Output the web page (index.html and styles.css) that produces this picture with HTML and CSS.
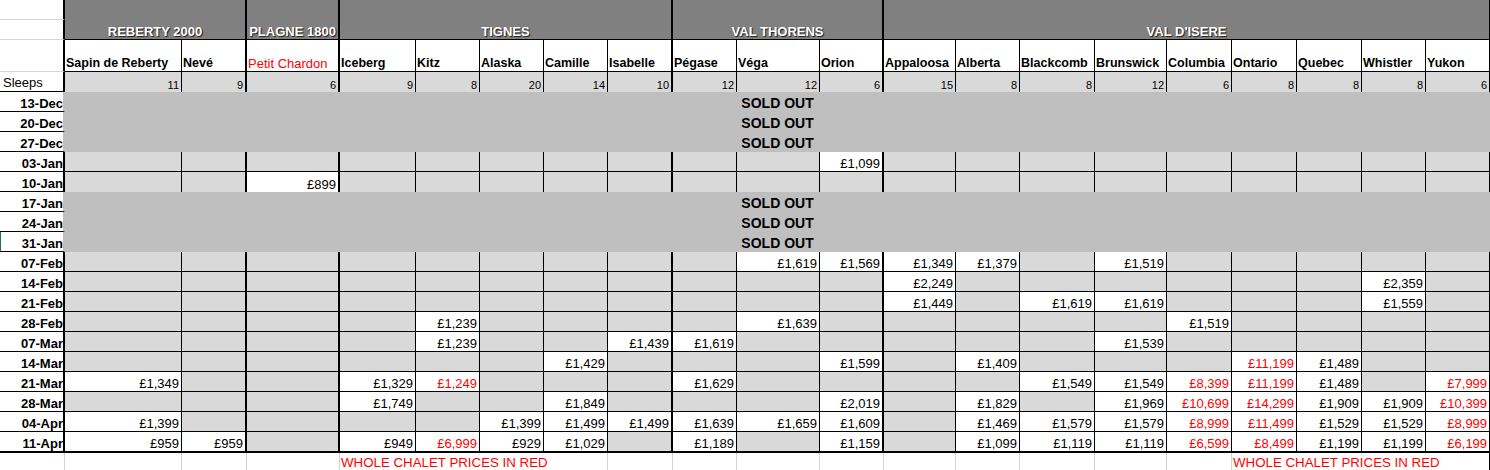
FILE: index.html
```html
<!DOCTYPE html>
<html lang="en">
<head>
<meta charset="utf-8">
<title>Chalet availability</title>
<link rel="stylesheet" href="styles.css">
</head>
<body>
<table class="sheet">
<colgroup>
<col class="c-lbl"><col class="c-sapin"><col class="c-neve"><col class="c-petit"><col class="c-iceberg"><col class="c-kitz"><col class="c-alaska"><col class="c-camille"><col class="c-isabelle"><col class="c-pegase"><col class="c-vega"><col class="c-orion"><col class="c-appaloosa"><col class="c-alberta"><col class="c-blackcomb"><col class="c-brunswick"><col class="c-columbia"><col class="c-ontario"><col class="c-quebec"><col class="c-whistler"><col class="c-yukon">
</colgroup>
<tbody>
<tr class="top">
<td class="lbl"></td>
<td class="region" colspan="2" rowspan="2">REBERTY 2000</td>
<td class="region" rowspan="2">PLAGNE 1800</td>
<td class="region" colspan="5" rowspan="2">TIGNES</td>
<td class="region" colspan="3" rowspan="2">VAL THORENS</td>
<td class="region end" colspan="9" rowspan="2">VAL D'ISERE</td>
</tr>
<tr class="top"><td class="lbl"></td></tr>
<tr class="names grid">
<td class="lbl"></td>
<td>Sapin de Reberty</td><td>Nevé</td><td class="red">Petit Chardon</td><td>Iceberg</td><td>Kitz</td><td>Alaska</td><td>Camille</td><td>Isabelle</td><td>Pégase</td><td>Véga</td><td>Orion</td><td>Appaloosa</td><td>Alberta</td><td>Blackcomb</td><td>Brunswick</td><td>Columbia</td><td>Ontario</td><td>Quebec</td><td>Whistler</td><td>Yukon</td>
</tr>
<tr class="sleeps grid">
<td class="lbl">Sleeps</td>
<td>11</td><td>9</td><td>6</td><td>9</td><td>8</td><td>20</td><td>14</td><td>10</td><td>12</td><td>12</td><td>6</td><td>15</td><td>8</td><td>8</td><td>12</td><td>6</td><td>8</td><td>8</td><td>8</td><td>6</td>
</tr>
<tr class="sold"><td class="lbl">13-Dec</td><td class="so" colspan="20">SOLD OUT</td></tr>
<tr class="sold"><td class="lbl">20-Dec</td><td class="so" colspan="20">SOLD OUT</td></tr>
<tr class="sold"><td class="lbl">27-Dec</td><td class="so" colspan="20">SOLD OUT</td></tr>
<tr class="day grid">
<td class="lbl">03-Jan</td>
<td></td><td></td><td></td><td></td><td></td><td></td><td></td><td></td><td></td><td></td><td class="p">£1,099</td><td></td><td></td><td></td><td></td><td></td><td></td><td></td><td></td><td></td>
</tr>
<tr class="day grid pre">
<td class="lbl">10-Jan</td>
<td></td><td></td><td class="p">£899</td><td></td><td></td><td></td><td></td><td></td><td></td><td></td><td></td><td></td><td></td><td></td><td></td><td></td><td></td><td></td><td></td><td></td>
</tr>
<tr class="sold"><td class="lbl">17-Jan</td><td class="so" colspan="20">SOLD OUT</td></tr>
<tr class="sold"><td class="lbl">24-Jan</td><td class="so" colspan="20">SOLD OUT</td></tr>
<tr class="sold"><td class="lbl sel">31-Jan</td><td class="so" colspan="20">SOLD OUT</td></tr>
<tr class="day grid">
<td class="lbl">07-Feb</td>
<td></td><td></td><td></td><td></td><td></td><td></td><td></td><td></td><td></td><td class="p">£1,619</td><td class="p">£1,569</td><td class="p">£1,349</td><td class="p">£1,379</td><td></td><td class="p">£1,519</td><td></td><td></td><td></td><td></td><td></td>
</tr>
<tr class="day grid">
<td class="lbl">14-Feb</td>
<td></td><td></td><td></td><td></td><td></td><td></td><td></td><td></td><td></td><td></td><td></td><td class="p">£2,249</td><td></td><td></td><td></td><td></td><td></td><td></td><td class="p">£2,359</td><td></td>
</tr>
<tr class="day grid">
<td class="lbl">21-Feb</td>
<td></td><td></td><td></td><td></td><td></td><td></td><td></td><td></td><td></td><td></td><td></td><td class="p">£1,449</td><td></td><td class="p">£1,619</td><td class="p">£1,619</td><td></td><td></td><td></td><td class="p">£1,559</td><td></td>
</tr>
<tr class="day grid">
<td class="lbl">28-Feb</td>
<td></td><td></td><td></td><td></td><td class="p">£1,239</td><td></td><td></td><td></td><td></td><td class="p">£1,639</td><td></td><td></td><td></td><td></td><td></td><td class="p">£1,519</td><td></td><td></td><td></td><td></td>
</tr>
<tr class="day grid">
<td class="lbl">07-Mar</td>
<td></td><td></td><td></td><td></td><td class="p">£1,239</td><td></td><td></td><td class="p">£1,439</td><td class="p">£1,619</td><td></td><td></td><td></td><td></td><td></td><td class="p">£1,539</td><td></td><td></td><td></td><td></td><td></td>
</tr>
<tr class="day grid">
<td class="lbl">14-Mar</td>
<td></td><td></td><td></td><td></td><td></td><td></td><td class="p">£1,429</td><td></td><td></td><td></td><td class="p">£1,599</td><td></td><td class="p">£1,409</td><td></td><td></td><td></td><td class="p w">£11,199</td><td class="p">£1,489</td><td></td><td></td>
</tr>
<tr class="day grid">
<td class="lbl">21-Mar</td>
<td class="p">£1,349</td><td></td><td></td><td class="p">£1,329</td><td class="p w">£1,249</td><td></td><td></td><td></td><td class="p">£1,629</td><td></td><td></td><td></td><td></td><td class="p">£1,549</td><td class="p">£1,549</td><td class="p w">£8,399</td><td class="p w">£11,199</td><td class="p">£1,489</td><td></td><td class="p w">£7,999</td>
</tr>
<tr class="day grid">
<td class="lbl">28-Mar</td>
<td></td><td></td><td></td><td class="p">£1,749</td><td></td><td></td><td class="p">£1,849</td><td></td><td></td><td></td><td class="p">£2,019</td><td></td><td class="p">£1,829</td><td></td><td class="p">£1,969</td><td class="p w">£10,699</td><td class="p w">£14,299</td><td class="p">£1,909</td><td class="p">£1,909</td><td class="p w">£10,399</td>
</tr>
<tr class="day grid">
<td class="lbl">04-Apr</td>
<td class="p">£1,399</td><td></td><td></td><td></td><td></td><td class="p">£1,399</td><td class="p">£1,499</td><td class="p">£1,499</td><td class="p">£1,639</td><td class="p">£1,659</td><td class="p">£1,609</td><td></td><td class="p">£1,469</td><td class="p">£1,579</td><td class="p">£1,579</td><td class="p w">£8,999</td><td class="p w">£11,499</td><td class="p">£1,529</td><td class="p">£1,529</td><td class="p w">£8,999</td>
</tr>
<tr class="day grid end">
<td class="lbl">11-Apr</td>
<td class="p">£959</td><td class="p">£959</td><td></td><td class="p">£949</td><td class="p w">£6,999</td><td class="p">£929</td><td class="p">£1,029</td><td></td><td class="p">£1,189</td><td></td><td class="p">£1,159</td><td></td><td class="p">£1,099</td><td class="p">£1,119</td><td class="p">£1,119</td><td class="p w">£6,599</td><td class="p w">£8,499</td><td class="p">£1,199</td><td class="p">£1,199</td><td class="p w">£6,199</td>
</tr>
<tr class="foot">
<td class="lbl"></td>
<td></td><td></td><td></td>
<td class="note" colspan="4">WHOLE CHALET PRICES IN RED</td>
<td></td><td></td><td></td><td></td><td></td><td></td><td></td><td></td><td></td>
<td class="note last" colspan="4">WHOLE CHALET PRICES IN RED</td>
</tr>
</tbody>
</table>
</body>
</html>
```

FILE: styles.css
```css
html, body {
  margin: 0;
  padding: 0;
  background: #fff;
  overflow: hidden;
}

.sheet {
  border-collapse: separate;
  border-spacing: 0;
  table-layout: fixed;
  width: 1490px;
  font-family: "Liberation Sans", Arial, sans-serif;
  font-size: 13px;
  color: #000;
}

.sheet td {
  padding: 0;
  white-space: nowrap;
  overflow: hidden;
  vertical-align: bottom;
  line-height: 15px;
}

/* column widths */
.c-lbl { width: 65px; }
.c-sapin { width: 117px; }
.c-neve { width: 65px; }
.c-petit { width: 93px; }
.c-iceberg { width: 76px; }
.c-kitz { width: 64px; }
.c-alaska { width: 64px; }
.c-camille { width: 64px; }
.c-isabelle { width: 65px; }
.c-pegase { width: 64px; }
.c-vega { width: 83px; }
.c-orion { width: 64px; }
.c-appaloosa { width: 72px; }
.c-alberta { width: 64px; }
.c-blackcomb { width: 75px; }
.c-brunswick { width: 72px; }
.c-columbia { width: 65px; }
.c-ontario { width: 65px; }
.c-quebec { width: 65px; }
.c-whistler { width: 64px; }
.c-yukon { width: 64px; }

/* row heights */
.top { height: 20px; }
.names { height: 32px; }
.sleeps { height: 20px; }
.sold, .day { height: 20px; }
.day.end { height: 21px; }
.foot { height: 17px; }

/* left label column */
.sheet td.lbl {
  background: #fff;
  border-right: 2px solid #000;
  border-bottom: 1px solid #d4d4d4;
}

/* region headers */
.region {
  background: #808080;
  color: #fff;
  font-weight: bold;
  text-align: center;
  border-right: 2px solid #000;
  border-bottom: 1px solid #000;
  text-shadow: 1px 1px 1px #1c1c1c;
}
.region.end { border-right-width: 1px; }

/* chalet names */
.names td {
  background: #fff;
  font-weight: bold;
  font-size: 12.5px;
  padding-left: 1px;
  border-right: 1px solid #000;
  border-bottom: 1px solid #000;
}
.names td.red {
  color: #f00;
  font-weight: normal;
  font-size: 13px;
}

/* sleeps */
.sleeps td {
  background: #d9d9d9;
  font-size: 11px;
  line-height: 13px;
  text-align: right;
  padding-right: 2px;
  border-right: 1px solid #000;
}
.sleeps td.lbl {
  font-size: 13px;
  line-height: 15px;
  text-align: left;
  padding: 0 0 1px 3px;
  border-bottom-color: #000;
}

/* date rows */
.day td {
  background: #d9d9d9;
  text-align: right;
  padding-right: 2px;
  border-right: 1px solid #000;
  border-bottom: 1px solid #000;
}
.day td.p { background: #fff; }
.day td.w { color: #f00; }

.day td.lbl,
.sold td.lbl {
  font-weight: bold;
  text-align: right;
  padding-right: 0;
  border-bottom: 1px solid #000;
}

.day.pre td { border-bottom: 0; }
.day.pre td.lbl { border-bottom: 1px solid #000; }
.day.end td,
.day.end td.lbl { border-bottom-width: 2px; }

/* thick group separators */
.grid td:nth-child(3),
.grid td:nth-child(4),
.grid td:nth-child(9),
.grid td:nth-child(12) {
  border-right-width: 2px;
}

/* sold out rows */
.sold td.so {
  background: #bfbfbf;
  text-align: center;
  font-weight: bold;
  font-size: 14px;
  padding-bottom: 1px;
}
.sold td.lbl { border-right-color: #bfbfbf; }
.sold td.lbl.sel { box-shadow: inset 1px 0 0 #217346; }

/* footer row */
.foot td {
  background: #fff;
  border-right: 1px solid #d4d4d4;
  line-height: 13px;
  padding-bottom: 1px;
}
.foot td.lbl {
  border-right: 1px solid #d4d4d4;
  border-bottom: 0;
}
.foot td.note {
  color: #f00;
  font-size: 13.3px;
  text-align: left;
  padding-left: 1px;
}
.foot td.note.last { border-right-color: #000; }
```
